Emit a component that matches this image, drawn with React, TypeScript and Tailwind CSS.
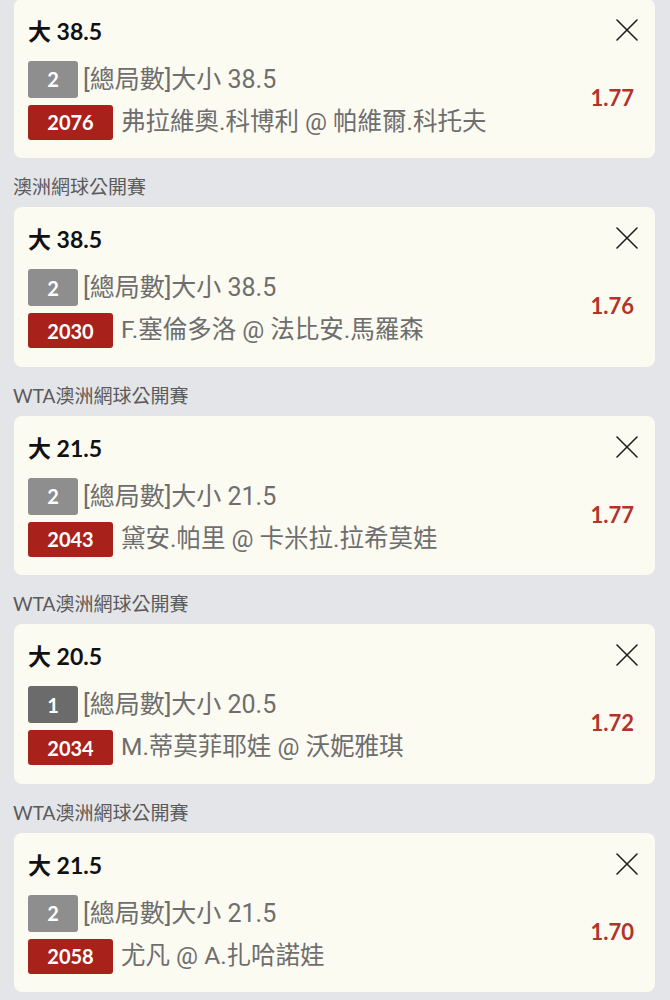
type Bet = {
  league?: string;
  title: string;
  seq: string;
  seqDark?: boolean;
  market: string;
  code: string;
  teams: string;
  odds: string;
};

const bets: Bet[] = [
  { title: "大 38.5", seq: "2", market: "[總局數]大小 38.5", code: "2076", teams: "弗拉維奧.科博利 @ 帕維爾.科托夫", odds: "1.77" },
  { league: "澳洲網球公開賽", title: "大 38.5", seq: "2", market: "[總局數]大小 38.5", code: "2030", teams: "F.塞倫多洛 @ 法比安.馬羅森", odds: "1.76" },
  { league: "WTA澳洲網球公開賽", title: "大 21.5", seq: "2", market: "[總局數]大小 21.5", code: "2043", teams: "黛安.帕里 @ 卡米拉.拉希莫娃", odds: "1.77" },
  { league: "WTA澳洲網球公開賽", title: "大 20.5", seq: "1", seqDark: true, market: "[總局數]大小 20.5", code: "2034", teams: "M.蒂莫菲耶娃 @ 沃妮雅琪", odds: "1.72" },
  { league: "WTA澳洲網球公開賽", title: "大 21.5", seq: "2", market: "[總局數]大小 21.5", code: "2058", teams: "尤凡 @ A.扎哈諾娃", odds: "1.70" },
];

const lato = "font-['Lato','Noto_Sans_CJK_TC',sans-serif]";
const body = "font-['Roboto','Noto_Sans_CJK_TC',sans-serif]";

function CloseIcon() {
  return (
    <svg width="22" height="22" viewBox="0 0 22 22" fill="none" stroke="#1f1f1f" strokeWidth="1.6" strokeLinecap="round">
      <line x1="1" y1="1" x2="21" y2="21" />
      <line x1="21" y1="1" x2="1" y2="21" />
    </svg>
  );
}

function BetCard({ bet }: { bet: Bet }) {
  return (
    <div className="bg-[#fcfbf2] rounded-[8px] pl-[14px] pr-[21px] pt-[18px] pb-[18.5px]">
      <div className="flex items-center justify-between h-[28px]">
        <span className={`${lato} text-[23px] font-bold text-[#111] leading-[28px]`}>{bet.title}</span>
        <span className="-mr-[4px] -mt-[2px]">
          <CloseIcon />
        </span>
      </div>
      <div className="flex items-center justify-between mt-4">
        <div className="flex flex-col gap-[7px]">
          <div className="flex items-center">
            <span
              className={`${lato} w-[50px] h-[37px] rounded-[3px] flex items-center justify-center text-white text-[20px] font-bold ${
                bet.seqDark ? "bg-[#6b6b6b]" : "bg-[#8e8e8e]"
              }`}
            >
              {bet.seq}
            </span>
            <span className={`${body} ml-[5px] text-[25px] text-[#6e6e6e] leading-none`}>{bet.market}</span>
          </div>
          <div className="flex items-center">
            <span className={`${lato} w-[85px] h-[35px] rounded-[3px] bg-[#a8211a] flex items-center justify-center text-white text-[20px] font-bold`}>
              {bet.code}
            </span>
            <span className={`${body} ml-[8px] text-[24.5px] text-[#6e6e6e] leading-none`}>{bet.teams}</span>
          </div>
        </div>
        <span className={`${lato} text-[22px] font-bold text-[#b3322a] pb-[6px]`}>{bet.odds}</span>
      </div>
    </div>
  );
}

export default function App() {
  return (
    <div className="min-h-[1000px] bg-[#e4e5e8] -mt-[1.5px] pb-8">
      <div className="ml-[14px] mr-[15px]">
        {bets.map((bet, i) => (
          <div key={i}>
            {bet.league && (
              <div className={`${lato} pt-[17px] pb-[8px] text-[19px] leading-[24px] text-[#5a5a5a] -ml-px`}>{bet.league}</div>
            )}
            <BetCard bet={bet} />
          </div>
        ))}
      </div>
    </div>
  );
}
